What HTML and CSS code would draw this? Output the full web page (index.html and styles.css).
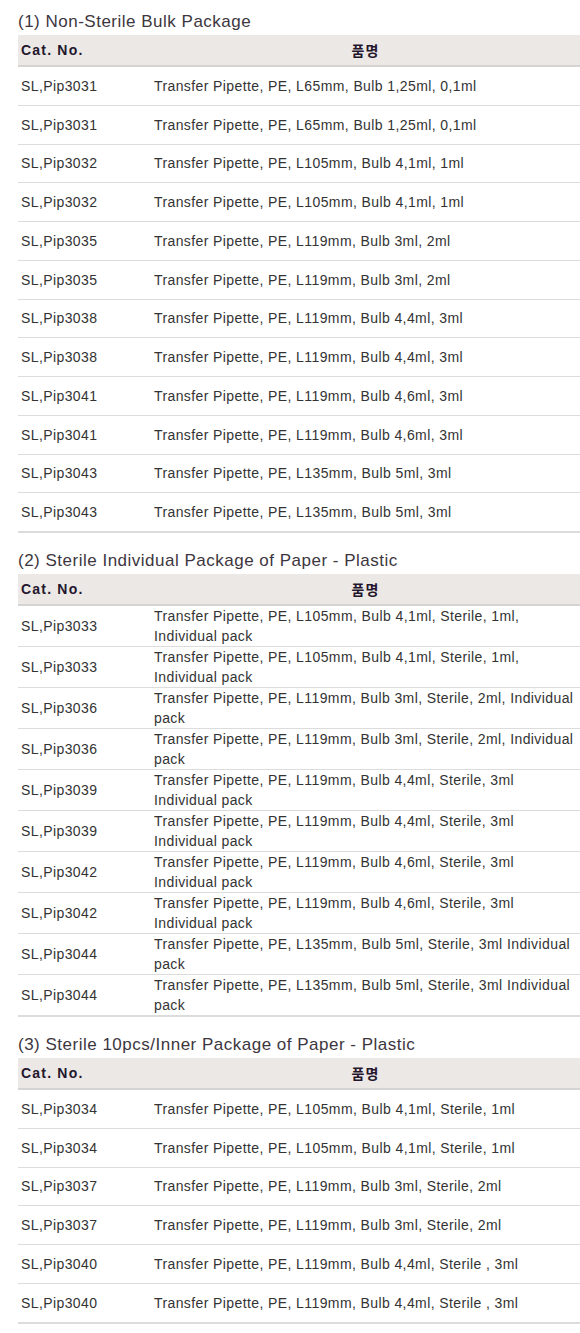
FILE: index.html
```html
<!DOCTYPE html>
<html lang="ko">
<head>
    <meta charset="UTF-8">
    <meta name="viewport" content="width=device-width, initial-scale=1.0">
    <title>Transfer Pipette</title>
    <link rel="stylesheet" href="styles.css">
</head>
<body>
    <div class="page">
        <div class="section">
            <h3>(1) Non-Sterile Bulk Package</h3>
            <table class="spec">
                <thead>
                    <tr><th class="cat">Cat. No.</th><th class="name">품명</th></tr>
                </thead>
                <tbody>
                    <tr><td>SL,Pip3031</td><td>Transfer Pipette, PE, L65mm, Bulb 1,25ml, 0,1ml</td></tr>
                    <tr><td>SL,Pip3031</td><td>Transfer Pipette, PE, L65mm, Bulb 1,25ml, 0,1ml</td></tr>
                    <tr><td>SL,Pip3032</td><td>Transfer Pipette, PE, L105mm, Bulb 4,1ml, 1ml</td></tr>
                    <tr><td>SL,Pip3032</td><td>Transfer Pipette, PE, L105mm, Bulb 4,1ml, 1ml</td></tr>
                    <tr><td>SL,Pip3035</td><td>Transfer Pipette, PE, L119mm, Bulb 3ml, 2ml</td></tr>
                    <tr><td>SL,Pip3035</td><td>Transfer Pipette, PE, L119mm, Bulb 3ml, 2ml</td></tr>
                    <tr><td>SL,Pip3038</td><td>Transfer Pipette, PE, L119mm, Bulb 4,4ml, 3ml</td></tr>
                    <tr><td>SL,Pip3038</td><td>Transfer Pipette, PE, L119mm, Bulb 4,4ml, 3ml</td></tr>
                    <tr><td>SL,Pip3041</td><td>Transfer Pipette, PE, L119mm, Bulb 4,6ml, 3ml</td></tr>
                    <tr><td>SL,Pip3041</td><td>Transfer Pipette, PE, L119mm, Bulb 4,6ml, 3ml</td></tr>
                    <tr><td>SL,Pip3043</td><td>Transfer Pipette, PE, L135mm, Bulb 5ml, 3ml</td></tr>
                    <tr><td>SL,Pip3043</td><td>Transfer Pipette, PE, L135mm, Bulb 5ml, 3ml</td></tr>
                </tbody>
            </table>
        </div>

        <div class="section">
            <h3>(2) Sterile Individual Package of Paper - Plastic</h3>
            <table class="spec two-line">
                <thead>
                    <tr><th class="cat">Cat. No.</th><th class="name">품명</th></tr>
                </thead>
                <tbody>
                    <tr><td>SL,Pip3033</td><td>Transfer Pipette, PE, L105mm, Bulb 4,1ml, Sterile, 1ml,<br>Individual pack</td></tr>
                    <tr><td>SL,Pip3033</td><td>Transfer Pipette, PE, L105mm, Bulb 4,1ml, Sterile, 1ml,<br>Individual pack</td></tr>
                    <tr><td>SL,Pip3036</td><td>Transfer Pipette, PE, L119mm, Bulb 3ml, Sterile, 2ml, Individual<br>pack</td></tr>
                    <tr><td>SL,Pip3036</td><td>Transfer Pipette, PE, L119mm, Bulb 3ml, Sterile, 2ml, Individual<br>pack</td></tr>
                    <tr><td>SL,Pip3039</td><td>Transfer Pipette, PE, L119mm, Bulb 4,4ml, Sterile, 3ml<br>Individual pack</td></tr>
                    <tr><td>SL,Pip3039</td><td>Transfer Pipette, PE, L119mm, Bulb 4,4ml, Sterile, 3ml<br>Individual pack</td></tr>
                    <tr><td>SL,Pip3042</td><td>Transfer Pipette, PE, L119mm, Bulb 4,6ml, Sterile, 3ml<br>Individual pack</td></tr>
                    <tr><td>SL,Pip3042</td><td>Transfer Pipette, PE, L119mm, Bulb 4,6ml, Sterile, 3ml<br>Individual pack</td></tr>
                    <tr><td>SL,Pip3044</td><td>Transfer Pipette, PE, L135mm, Bulb 5ml, Sterile, 3ml Individual<br>pack</td></tr>
                    <tr><td>SL,Pip3044</td><td>Transfer Pipette, PE, L135mm, Bulb 5ml, Sterile, 3ml Individual<br>pack</td></tr>
                </tbody>
            </table>
        </div>

        <div class="section">
            <h3>(3) Sterile 10pcs/Inner Package of Paper - Plastic</h3>
            <table class="spec">
                <thead>
                    <tr><th class="cat">Cat. No.</th><th class="name">품명</th></tr>
                </thead>
                <tbody>
                    <tr><td>SL,Pip3034</td><td>Transfer Pipette, PE, L105mm, Bulb 4,1ml, Sterile, 1ml</td></tr>
                    <tr><td>SL,Pip3034</td><td>Transfer Pipette, PE, L105mm, Bulb 4,1ml, Sterile, 1ml</td></tr>
                    <tr><td>SL,Pip3037</td><td>Transfer Pipette, PE, L119mm, Bulb 3ml, Sterile, 2ml</td></tr>
                    <tr><td>SL,Pip3037</td><td>Transfer Pipette, PE, L119mm, Bulb 3ml, Sterile, 2ml</td></tr>
                    <tr><td>SL,Pip3040</td><td>Transfer Pipette, PE, L119mm, Bulb 4,4ml, Sterile , 3ml</td></tr>
                    <tr><td>SL,Pip3040</td><td>Transfer Pipette, PE, L119mm, Bulb 4,4ml, Sterile , 3ml</td></tr>
                </tbody>
            </table>
        </div>
    </div>
</body>
</html>
```

FILE: styles.css
```css
body {
    margin: 0;
    background: #fff;
    font-family: "Liberation Sans", "Noto Sans CJK KR", Arial, sans-serif;
    color: #333;
}
.page {
    padding: 8px 0 0 18px;
}
.section {
    margin-bottom: 14px;
}
h3 {
    margin: 0;
    font-size: 17px;
    font-weight: normal;
    line-height: 27px;
    letter-spacing: 0.5px;
    color: #3d3640;
}
.spec {
    width: 562px;
    border-collapse: collapse;
    font-size: 14px;
    letter-spacing: 0.4px;
    border-bottom: 2px solid #dcdcdc;
}
.spec th {
    height: 30px;
    background: #ebe8e6;
    border-bottom: 2px solid #d6d4d2;
    font-weight: bold;
    font-size: 14px;
    letter-spacing: 1.2px;
    color: #24162c;
    padding: 0 3px;
}
.spec th.cat {
    width: 127px;
    text-align: left;
}
.spec th.name {
    text-align: center;
}
.spec td {
    height: 37.75px;
    padding: 0 3px;
    border-top: 1px solid #dcdcdc;
    vertical-align: middle;
}
.two-line td {
    height: 40px;
    line-height: 20px;
    vertical-align: top;
    white-space: nowrap;
}
.two-line td:first-child {
    vertical-align: middle;
}
```
